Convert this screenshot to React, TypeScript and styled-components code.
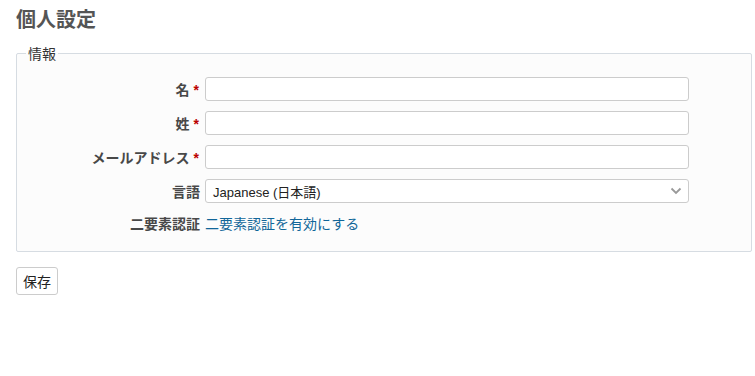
import React from 'react';
import styled, { createGlobalStyle } from 'styled-components';

const GlobalStyle = createGlobalStyle`
  body {
    margin: 0;
    background: #fff;
    font-family: "Liberation Sans", "Noto Sans CJK JP", sans-serif;
    color: #333;
  }
`;

const fields = [
  { label: '名', required: true, value: '' },
  { label: '姓', required: true, value: '' },
  { label: 'メールアドレス', required: true, value: '' },
];

const App = () => {
  return (
    <Page>
      <GlobalStyle />
      <Title>個人設定</Title>
      <Box>
        <Legend>情報</Legend>
        <Form>
          {fields.map((f) => (
            <React.Fragment key={f.label}>
              <Label>
                {f.label}
                {f.required && <Required>*</Required>}
              </Label>
              <Input type="text" defaultValue={f.value} />
            </React.Fragment>
          ))}
          <Label>言語</Label>
          <SelectBox>
            <span>Japanese (日本語)</span>
            <svg width="12" height="8" viewBox="0 0 12 8">
              <path d="M1.5 1.5 L6 6 L10.5 1.5" fill="none" stroke="#999" strokeWidth="1.8" />
            </svg>
          </SelectBox>
          <Label>二要素認証</Label>
          <LinkText href="#">二要素認証を有効にする</LinkText>
        </Form>
      </Box>
      <SaveButton>保存</SaveButton>
    </Page>
  );
};

export default App;

const Page = styled.div`
  padding: 8px 3px 0 16px;
`;

const Title = styled.h2`
  margin: 0 0 11px;
  font-size: 20px;
  line-height: 24px;
  font-weight: bold;
  color: #555;
`;

const Box = styled.fieldset`
  margin: 0;
  padding: 14px 0 18px;
  border: 1px solid #d6dce2;
  border-radius: 2px;
  background: #fcfcfc;
`;

const Legend = styled.legend`
  margin-left: 9px;
  padding: 0 2px;
  font-size: 14px;
  color: #333;
`;

const Form = styled.div`
  display: grid;
  grid-template-columns: 183px 484px;
  column-gap: 5px;
  row-gap: 10px;
  align-items: center;
`;

const Label = styled.label`
  text-align: right;
  font-size: 14px;
  font-weight: bold;
  color: #484848;
  white-space: nowrap;
`;

const Required = styled.span`
  color: #bb0000;
  margin-left: 4px;
  margin-right: 1px;
`;

const Input = styled.input`
  box-sizing: border-box;
  height: 24px;
  width: 100%;
  border: 1px solid #ccc;
  border-radius: 3px;
  background: #fff;
  padding: 2px 6px;
  font-size: 13px;
`;

const SelectBox = styled.div`
  box-sizing: border-box;
  height: 24px;
  display: flex;
  align-items: center;
  justify-content: space-between;
  border: 1px solid #ccc;
  border-radius: 3px;
  background: #fff;
  padding: 0 6px 0 7px;
  font-size: 13px;
  color: #222;
`;

const LinkText = styled.a`
  font-size: 14px;
  line-height: 18px;
  color: #116699;
  text-decoration: none;
  margin-bottom: -2px;
`;

const SaveButton = styled.button`
  margin-top: 15px;
  height: 28px;
  padding: 0 6px;
  border: 1px solid #ccc;
  border-radius: 3px;
  background: #fff;
  font-family: "Liberation Sans", "Noto Sans CJK JP", sans-serif;
  font-size: 14px;
  color: #222;
`;
